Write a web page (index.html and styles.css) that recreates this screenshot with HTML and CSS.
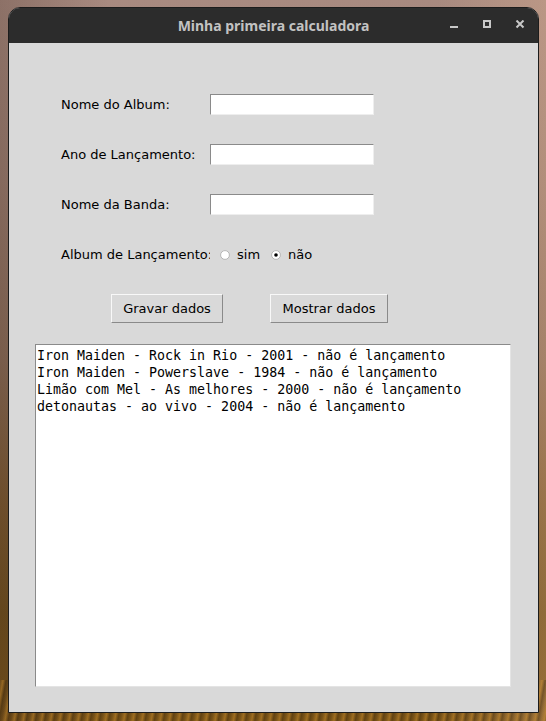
FILE: index.html
```html
<!DOCTYPE html>
<html lang="pt">
<head>
<meta charset="utf-8">
<title>Minha primeira calculadora</title>
<link rel="stylesheet" href="styles.css">
</head>
<body>
<div class="desktop">
  <div class="window">
    <div class="titlebar">
      <div class="title">Minha primeira calculadora</div>
      <div class="controls">
        <svg class="ctl" width="10" height="10" viewBox="0 0 10 10"><rect x="1" y="6" width="8" height="2" fill="#c8c8c8"/></svg>
        <svg class="ctl" width="10" height="10" viewBox="0 0 10 10"><rect x="2" y="1" width="6" height="6" fill="none" stroke="#c8c8c8" stroke-width="2"/></svg>
        <svg class="ctl" width="10" height="10" viewBox="0 0 10 10"><path d="M1.5 0.5 L8.5 7.5 M8.5 0.5 L1.5 7.5" stroke="#c8c8c8" stroke-width="2" fill="none"/></svg>
      </div>
    </div>
    <div class="content">
      <div class="form">
        <label class="lbl">Nome do Album:</label>
        <div class="entry"></div>
        <label class="lbl">Ano de Lançamento:</label>
        <div class="entry"></div>
        <label class="lbl">Nome da Banda:</label>
        <div class="entry"></div>
        <label class="lbl radio-lbl">Album de Lançamento:</label>
        <div class="radios">
          <span class="radio">
            <svg width="10" height="10" viewBox="0 0 10 10"><circle cx="5" cy="5" r="4.4" fill="#fff" stroke="#a9a9a9" stroke-width="0.8"/></svg>
            <span>sim</span>
          </span>
          <span class="radio">
            <svg width="10" height="10" viewBox="0 0 10 10"><circle cx="5" cy="5" r="4.4" fill="#fff" stroke="#a9a9a9" stroke-width="0.8"/><circle cx="5" cy="5" r="1.8" fill="#000"/></svg>
            <span>não</span>
          </span>
        </div>
      </div>
      <div class="buttons">
        <div class="btn btn-gravar">Gravar dados</div>
        <div class="btn btn-mostrar">Mostrar dados</div>
      </div>
      <div class="textarea">
        <div class="line">Iron Maiden - Rock in Rio - 2001 - não é lançamento</div>
        <div class="line">Iron Maiden - Powerslave - 1984 - não é lançamento</div>
        <div class="line">Limão com Mel - As melhores - 2000 - não é lançamento</div>
        <div class="line">detonautas - ao vivo - 2004 - não é lançamento</div>
      </div>
    </div>
  </div>
</div>
</body>
</html>
```
FILE: styles.css
```css
html, body {
  margin: 0;
  padding: 0;
}
body {
  width: 546px;
  height: 721px;
  overflow: hidden;
  background:
    repeating-linear-gradient(100deg, rgba(230,160,50,0) 0px, rgba(230,160,50,0.35) 3px, rgba(40,25,5,0.3) 6px, rgba(230,160,50,0) 9px) 0 680px / 546px 41px no-repeat,
    linear-gradient(to right, rgba(60,40,30,0.25) 0%, rgba(0,0,0,0) 20%, rgba(0,0,0,0) 80%, rgba(240,190,150,0.25) 100%),
    linear-gradient(to bottom, #a88a80 0%, #9d7f72 25%, #8c6e5a 50%, #7d5a30 70%, #70501c 85%, #7a5418 100%);
}
.desktop {
  padding: 7px 0 0 8px;
}
.window {
  width: 529px;
  height: 704px;
  border: 1px solid #1c1c1c;
  border-radius: 12px 12px 0 0;
  overflow: hidden;
  background: #d9d9d9;
  display: flex;
  flex-direction: column;
}
.titlebar {
  height: 35px;
  flex: none;
  background: #2c2c2c;
  position: relative;
  display: flex;
  align-items: center;
  justify-content: center;
}
.title {
  font-family: "Noto Sans", "DejaVu Sans", sans-serif;
  font-weight: bold;
  font-size: 14px;
  color: #c2c2c2;
}
.controls {
  position: absolute;
  right: 13px;
  top: 12px;
  display: flex;
  gap: 23px;
}
.ctl {
  display: block;
}
.content {
  flex: 1;
  background: #d9d9d9;
  padding-top: 51px;
  font-family: "DejaVu Sans", sans-serif;
  font-size: 13px;
  color: #000;
}
.form {
  display: grid;
  grid-template-columns: 149px 164px;
  grid-auto-rows: 21px;
  row-gap: 29px;
  padding-left: 52px;
}
.lbl {
  display: flex;
  align-items: center;
  white-space: nowrap;
  line-height: 16px;
}
.entry {
  box-sizing: border-box;
  height: 21px;
  background: #fff;
  border-top: 1px solid #8a8a8a;
  border-left: 1px solid #8a8a8a;
  border-bottom: 1px solid #eeeeee;
  border-right: 1px solid #eeeeee;
}
.radios {
  display: flex;
  align-items: center;
  background: #d9d9d9;
  padding-left: 10px;
  gap: 11px;
  position: relative;
}
.radio {
  display: flex;
  align-items: center;
  gap: 7px;
}
.radio svg {
  display: block;
}
.buttons {
  display: flex;
  gap: 47px;
  padding-left: 102px;
  margin-top: 29px;
}
.btn {
  box-sizing: border-box;
  height: 29px;
  display: flex;
  align-items: center;
  justify-content: center;
  background: #d9d9d9;
  border-top: 1px solid #f8f8f8;
  border-left: 1px solid #f8f8f8;
  border-bottom: 1px solid #8a8a8a;
  border-right: 1px solid #8a8a8a;
}
.btn-gravar {
  width: 112px;
}
.btn-mostrar {
  width: 118px;
}
.textarea {
  box-sizing: border-box;
  margin: 21px 0 0 26px;
  width: 476px;
  height: 343px;
  background: #fff;
  border-top: 1px solid #8a8a8a;
  border-left: 1px solid #8a8a8a;
  border-bottom: 1px solid #e4e4e4;
  border-right: 1px solid #e4e4e4;
  padding: 2px 0 0 1px;
  font-family: "DejaVu Sans Mono", monospace;
  font-size: 13.3px;
  line-height: 17px;
}
.line {
  white-space: pre;
}
```
